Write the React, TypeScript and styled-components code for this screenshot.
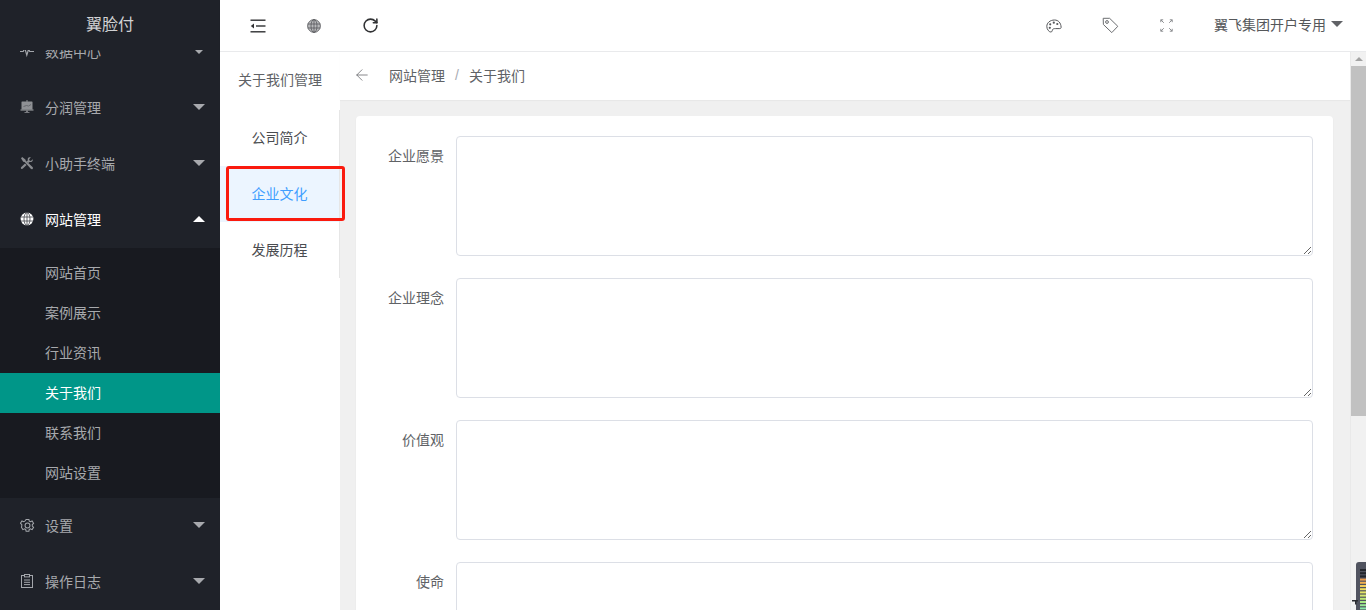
import React from 'react';
import styled, { createGlobalStyle } from 'styled-components';
import { ArrowLeft, RotateCw } from 'lucide-react';

const GlobalStyle = createGlobalStyle`
  html, body {
    margin: 0;
    padding: 0;
    height: 100%;
    overflow: hidden;
    background: #fff;
    font-family: "Liberation Sans", "Noto Sans CJK SC", sans-serif;
  }
  #root { height: 100%; }
  * { box-sizing: border-box; }
`;

const GlobeIcon = () => (
  <svg width="14" height="14" viewBox="0 0 14 14" fill="none">
    <circle cx="7" cy="7" r="6.4" fill="#fff" />
    <g stroke="#1f2229" strokeWidth="0.8" fill="none" opacity="0.85">
      <ellipse cx="7" cy="7" rx="3" ry="6.4" />
      <path d="M7 .6v12.8M.8 5h12.400M.8 9h12.400" />
    </g>
  </svg>
);

const PulseIcon = () => (
  <svg width="14" height="14" viewBox="0 0 14 14" fill="none" stroke="#a3a6ab" strokeWidth="1.2">
    <path d="M0 7.500h3.200l1.600-3.400 2 7 1.800-6 1.100 2.400H14" />
  </svg>
);

const BoardIcon = () => (
  <svg width="14" height="14" viewBox="0 0 14 14">
    <rect x="1.500" y="1.500" width="11" height="8" rx="0.600" fill="#8f9195" />
    <path d="M3.500 6.500l3-1 2 .5 2.500-1.500" stroke="#5b5d62" strokeWidth="0.8" fill="none" />
    <rect x="0.500" y="9.500" width="13" height="1" fill="#a9abae" />
    <rect x="6.200" y="10.500" width="1.600" height="1.500" fill="#8f9195" />
    <rect x="4.500" y="12" width="5" height="0.800" fill="#8f9195" />
    <rect x="6" y="0.500" width="2" height="1" fill="#8f9195" />
  </svg>
);

const ToolsIcon = () => (
  <svg width="14" height="14" viewBox="0 0 14 14" fill="#8a8c90">
    <path d="M1 2.200L2.200 1l3.200 2.400.4 1.400 6.700 6.300c.6.600.6 1.300.1 1.800s-1.200.5-1.800-.1L4.600 6.100 3.200 5.700z" />
    <path d="M12.800 3.300l-2 1.700-1.300-.4-.4-1.300 1.800-2C9.500.9 8.200 1.400 7.800 2.500c-.2.600-.1 1.200.1 1.700L6.600 5.400l1.700 1.700 1.300-1.200c.6.200 1.200.2 1.800 0 1.100-.4 1.700-1.500 1.400-2.600z" />
    <path d="M5 7.500L1.300 11c-.6.600-.6 1.200-.1 1.700s1.100.5 1.700-.1l3.700-3.500z" />
  </svg>
);

const GearIcon = () => (
  <svg width="15" height="15" viewBox="0 0 16 16" fill="none" stroke="#a3a6ab" strokeWidth="1.100">
    <path d="M6.500.7h3l.4 1.900 1.200.6 1.800-.8 1.600 2.500-1.400 1.300v1.600l1.400 1.300-1.600 2.500-1.800-.8-1.200.6-.4 1.900h-3l-.4-1.900-1.200-.6-1.800.8-1.600-2.500L1.900 7.800V6.200L.5 4.900l1.600-2.500 1.800.8 1.200-.6z" transform="translate(0 .8)" />
    <circle cx="8" cy="8" r="2.600" />
  </svg>
);

const LogIcon = () => (
  <svg width="14" height="14" viewBox="0 0 14 14" fill="none" stroke="#a3a6ab" strokeWidth="1">
    <rect x="1.500" y="1.500" width="11" height="12" />
    <rect x="4.500" y="0.500" width="5" height="2.400" fill="#1f2229" />
    <path d="M4 6h6M4 8.300h6M4 10.600h6" />
  </svg>
);

const FoldIcon = () => (
  <svg width="16" height="14" viewBox="0 0 16 14" fill="#303133">
    <rect x="0.500" y="0.500" width="15" height="1.400" />
    <rect x="6" y="6.300" width="9.500" height="1.400" />
    <rect x="0.500" y="12.100" width="15" height="1.400" />
    <path d="M0.800 7l3.200-2.400v4.800z" />
  </svg>
);

const TopGlobeIcon = () => (
  <svg width="14" height="14" viewBox="0 0 14 14" fill="none">
    <circle cx="7" cy="7" r="6.500" fill="#b9babc" />
    <g stroke="#55575a" strokeWidth="0.800">
      <circle cx="7" cy="7" r="6.400" />
      <ellipse cx="7" cy="7" rx="3" ry="6.400" />
      <path d="M7 .6v12.800M.8 5h12.400M.8 9h12.400" />
    </g>
  </svg>
);

const PaletteIcon = () => (
  <svg width="16" height="14" viewBox="0 0 16 14" fill="none" stroke="#55575a" strokeWidth="1">
    <path d="M8.500 1C4.200 1 .8 3.800.8 7.400c0 3 2.200 5.600 4 5.600 1.500 0 1.400-1.600 1.800-2.400.5-1 1.500-1 3-1h4.200c1 0 1.400-.7 1.300-1.600C14.800 4 12.500 1 8.500 1z" />
    <g fill="#55575a" stroke="none">
      <circle cx="4.200" cy="5.300" r="1.100" />
      <circle cx="7.800" cy="3.700" r="1.100" />
      <circle cx="11.300" cy="5" r="1.100" />
      <circle cx="3.800" cy="8.800" r="1.100" />
    </g>
  </svg>
);

const TagIcon = () => (
  <svg width="17" height="17" viewBox="0 0 17 17" fill="none" stroke="#6b6d70" strokeWidth="1">
    <path d="M1.200 1.300h6.400l8.200 8-6 6.300-8.400-8.100z" strokeLinejoin="round" />
    <circle cx="5" cy="5" r="1.400" />
  </svg>
);

const FullscreenIcon = () => (
  <svg width="13" height="13" viewBox="0 0 13 13" fill="none" stroke="#8b8d90" strokeWidth="1">
    <path d="M.8 3.200V.8h2.400M.8.800l3 3M12.200 3.200V.8H9.800M12.200.8l-3 3M.8 9.800v2.400h2.400M.8 12.200l3-3M12.200 9.800v2.400H9.800M12.200 12.200l-3-3" />
  </svg>
);

const meterBars = [
  '#23262d', '#23262d', '#23262d', '#e89a4c', '#f0b050', '#f0cc58', '#ecdc60', '#e4e468',
  '#d4e870', '#bce878', '#a8e884', '#98e894', '#88e8a8',
];

const menuBefore = [
  { name: '数据中心', icon: <PulseIcon /> },
  { name: '分润管理', icon: <BoardIcon /> },
  { name: '小助手终端', icon: <ToolsIcon /> },
];
const subItems = ['网站首页', '案例展示', '行业资讯', '关于我们', '联系我们', '网站设置'];
const menuAfter = [
  { name: '设置', icon: <GearIcon /> },
  { name: '操作日志', icon: <LogIcon /> },
];
const tabs = ['公司简介', '企业文化', '发展历程'];
const fields = ['企业愿景', '企业理念', '价值观', '使命'];

const App = () => {
  return (
    <Page>
      <GlobalStyle />
      <Sidebar>
        <Logo>翼脸付</Logo>
        <MenuScroll>
          <MenuList>
            {menuBefore.map((m) => (
              <MenuRow key={m.name}>
                <MenuIcon>{m.icon}</MenuIcon>
                <MenuName>{m.name}</MenuName>
                <Caret />
              </MenuRow>
            ))}
            <MenuRow $open>
              <MenuIcon><GlobeIcon /></MenuIcon>
              <MenuName>网站管理</MenuName>
              <Caret $up />
            </MenuRow>
            <SubMenu>
              {subItems.map((s) => (
                <SubRow key={s} $active={s === '关于我们'}>{s}</SubRow>
              ))}
            </SubMenu>
            {menuAfter.map((m) => (
              <MenuRow key={m.name}>
                <MenuIcon>{m.icon}</MenuIcon>
                <MenuName>{m.name}</MenuName>
                <Caret />
              </MenuRow>
            ))}
          </MenuList>
        </MenuScroll>
      </Sidebar>

      <Right>
        <TopBar>
          <ToolGroup>
            <ToolBtn><FoldIcon /></ToolBtn>
            <ToolBtn><TopGlobeIcon /></ToolBtn>
            <ToolBtn><RotateCw size={17} strokeWidth={2.2} color="#303133" /></ToolBtn>
          </ToolGroup>
          <ToolGroup>
            <ToolBtn><PaletteIcon /></ToolBtn>
            <ToolBtn><TagIcon /></ToolBtn>
            <ToolBtn><FullscreenIcon /></ToolBtn>
            <UserName>翼飞集团开户专用<UserCaret /></UserName>
          </ToolGroup>
        </TopBar>

        <Body>
          <SubSide>
            <SubTitle>关于我们管理</SubTitle>
            <TabList>
              {tabs.map((t) => (
                <TabItem key={t} $active={t === '企业文化'}>
                  {t}
                  {t === '企业文化' && <RedBox />}
                </TabItem>
              ))}
            </TabList>
          </SubSide>

          <Content>
            <Breadcrumb>
              <BackArrow><ArrowLeft size={18} strokeWidth={1} color="#606266" /></BackArrow>
              <CrumbText>网站管理</CrumbText>
              <CrumbSep>/</CrumbSep>
              <CrumbText>关于我们</CrumbText>
            </Breadcrumb>
            <Card>
              {fields.map((f) => (
                <FormRow key={f}>
                  <FormLabel>{f}</FormLabel>
                  <TextArea readOnly />
                </FormRow>
              ))}
            </Card>
          </Content>

          <ScrollTrack>
            <ScrollArrow />
            <ScrollThumb />
          </ScrollTrack>
        </Body>
      </Right>

      <Widget>
        <svg width="14" height="48" viewBox="0 0 14 48">
          <path d="M4 48V3q0-3 3-3h7v48z" fill="#50535f" />
          <path d="M0 38h6v1.500H4.500v3H3v-3H0z" fill="#2a2c31" />
          {meterBars.map((c, i) => (
            <rect key={i} x="8" y={7 + i * 3.2} width="6" height="2" fill={c} />
          ))}
        </svg>
      </Widget>
    </Page>
  );
};

export default App;

const Page = styled.div`
  display: flex;
  height: 610px;
  width: 1366px;
  overflow: hidden;
  position: relative;
`;

const Sidebar = styled.aside`
  flex: 0 0 220px;
  display: flex;
  flex-direction: column;
  background: #1f2229;
  height: 100%;
`;

const Logo = styled.div`
  flex: 0 0 50px;
  display: flex;
  align-items: center;
  justify-content: center;
  padding-bottom: 4px;
  color: #d0d1d3;
  font-size: 16px;
  background: #1f2229;
`;

const MenuScroll = styled.div`
  flex: 1;
  overflow: hidden;
`;

const MenuList = styled.div`
  margin-top: -26px;
`;

const MenuRow = styled.div<{ $open?: boolean }>`
  height: 56px;
  display: flex;
  align-items: center;
  padding: 0 15px 2px 20px;
  font-size: 14px;
  color: ${(p) => (p.$open ? '#ffffff' : '#a7a9ad')};
`;

const MenuIcon = styled.span`
  width: 14px;
  height: 16px;
  margin-right: 11px;
  display: flex;
  align-items: center;
  justify-content: center;
  flex-shrink: 0;
  & > svg {
    flex-shrink: 0;
  }
`;

const MenuName = styled.span`
  flex: 1;
`;

const Caret = styled.span<{ $up?: boolean }>`
  width: 0;
  height: 0;
  border-left: 6px solid transparent;
  border-right: 6px solid transparent;
  ${(p) => (p.$up ? 'border-bottom: 6px solid #ffffff;' : 'border-top: 6px solid #a7a9ad;')}
`;

const SubMenu = styled.div`
  background: #181a20;
  padding: 5px 0;
`;

const SubRow = styled.div<{ $active?: boolean }>`
  height: 40px;
  padding-left: 45px;
  line-height: 40px;
  font-size: 14px;
  color: ${(p) => (p.$active ? '#ffffff' : '#a7a9ad')};
  background: ${(p) => (p.$active ? '#009688' : 'transparent')};
`;

const Right = styled.div`
  flex: 1;
  display: flex;
  flex-direction: column;
  min-width: 0;
`;

const TopBar = styled.header`
  flex: 0 0 52px;
  display: flex;
  align-items: center;
  justify-content: space-between;
  padding: 0 23px 0 10px;
  background: #fff;
  border-bottom: 1px solid #e9eaec;
  box-shadow: 0 1px 1px rgba(0, 0, 0, 0.03);
`;

const ToolGroup = styled.div`
  display: flex;
  align-items: center;
`;

const ToolBtn = styled.div`
  width: 56px;
  height: 50px;
  display: flex;
  align-items: center;
  justify-content: center;
`;

const UserName = styled.div`
  display: flex;
  align-items: center;
  margin-left: 20px;
  font-size: 14px;
  color: #55575a;
  margin-top: -4px;
`;

const UserCaret = styled.span`
  width: 0;
  height: 0;
  margin-left: 5px;
  border-left: 6px solid transparent;
  border-right: 6px solid transparent;
  border-top: 6px solid #606266;
`;

const Body = styled.div`
  flex: 1;
  display: flex;
  min-height: 0;
`;

const SubSide = styled.div`
  flex: 0 0 120px;
  background: #fff;
`;

const SubTitle = styled.div`
  height: 58px;
  line-height: 56px;
  text-align: center;
  font-size: 14px;
  color: #606266;
`;

const TabList = styled.div`
  border-right: 1px solid #e6e6e6;
  height: 168px;
`;

const TabItem = styled.div<{ $active?: boolean }>`
  position: relative;
  height: 56px;
  line-height: 56px;
  text-align: center;
  font-size: 14px;
  color: ${(p) => (p.$active ? '#409eff' : '#4a4c50')};
  background: ${(p) => (p.$active ? '#ecf5ff' : 'transparent')};
`;

const RedBox = styled.span`
  position: absolute;
  left: 6px;
  top: 0;
  width: 119px;
  height: 55px;
  border: 3px solid #fa1a0e;
  border-radius: 3px;
`;

const Content = styled.div`
  flex: 1;
  min-width: 0;
  background: #f0f0f0;
`;

const Breadcrumb = styled.div`
  height: 48px;
  display: flex;
  align-items: center;
  padding: 0 0 2px 15px;
  background: #fff;
  font-size: 14px;
  color: #606266;
  box-shadow: 0 1px 1px rgba(0, 0, 0, 0.03);
`;

const BackArrow = styled.span`
  width: 14px;
  margin-right: 20px;
  display: flex;
  justify-content: center;
  & > svg {
    flex-shrink: 0;
  }
`;

const CrumbText = styled.span``;

const CrumbSep = styled.span`
  margin: 0 10px;
  color: #a8abb2;
`;

const Card = styled.div`
  width: 977px;
  margin: 16px 0 0 16px;
  padding: 20px 20px 0 0;
  background: #fff;
  border-radius: 4px;
  box-shadow: 0 1px 2px rgba(0, 0, 0, 0.05);
`;

const FormRow = styled.div`
  display: flex;
  margin-bottom: 22px;
`;

const FormLabel = styled.label`
  flex: 0 0 100px;
  padding-right: 12px;
  text-align: right;
  line-height: 40px;
  font-size: 14px;
  color: #606266;
`;

const TextArea = styled.textarea`
  flex: 1;
  height: 120px;
  border: 1px solid #dcdfe6;
  border-radius: 4px;
  background: #fff;
  outline: none;
  resize: vertical;
`;

const ScrollTrack = styled.div`
  flex: 0 0 16px;
  background: #f1f1f1;
  border-left: 1px solid #e9e9e9;
`;

const ScrollArrow = styled.div`
  width: 0;
  height: 0;
  margin: 5px auto;
  border-left: 4px solid transparent;
  border-right: 4px solid transparent;
  border-bottom: 4px solid #a3a3a3;
`;

const ScrollThumb = styled.div`
  height: 350px;
  background: #c1c1c1;
`;

const Widget = styled.div`
  position: absolute;
  right: 0;
  bottom: 0;
  width: 14px;
  height: 48px;
  line-height: 0;
`;
